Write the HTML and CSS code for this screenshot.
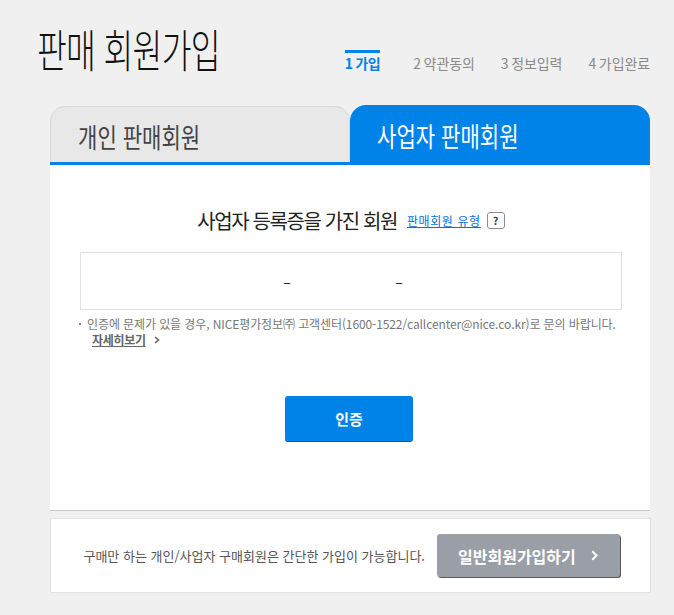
FILE: index.html
```html
<!DOCTYPE html>
<html lang="ko">
<head>
<meta charset="utf-8">
<title>판매 회원가입</title>
<link rel="stylesheet" href="styles.css">
</head>
<body>
<div class="page">
  <header class="head">
    <h1 class="title"><span class="title-text">판매 회원가입</span></h1>
    <ol class="steps">
      <li class="step on">1 가입</li>
      <li class="step">2 약관동의</li>
      <li class="step">3 정보입력</li>
      <li class="step">4 가입완료</li>
    </ol>
  </header>

  <div class="tabs">
    <a class="tab" href="#"><span class="tab-text">개인 판매회원</span></a>
    <a class="tab on" href="#"><span class="tab-text">사업자 판매회원</span></a>
  </div>

  <section class="panel">
    <div class="heading-row">
      <h2 class="heading">사업자 등록증을 가진 회원</h2>
      <a class="type-link" href="#">판매회원 유형</a>
      <span class="help">?</span>
    </div>

    <div class="bizno">
      <span class="field f1"></span>
      <span class="dash">–</span>
      <span class="field f2"></span>
      <span class="dash">–</span>
      <span class="field f3"></span>
    </div>

    <p class="note"><span class="bullet"></span>인증에 문제가 있을 경우, NICE평가정보㈜ 고객센터(1600-1522/callcenter@nice.co.kr)로 문의 바랍니다.</p>
    <p class="more"><a href="#" class="more-link">자세히보기</a><svg class="more-arrow" width="6" height="8" viewBox="0 0 6 8"><polyline points="1,1 4.5,4 1,7" fill="none" stroke="#666" stroke-width="1.6"/></svg></p>

    <div class="btn-row">
      <button class="btn-auth" type="button">인증</button>
    </div>
  </section>

  <div class="foot">
    <p class="foot-text">구매만 하는 개인/사업자 구매회원은 간단한 가입이 가능합니다.</p>
    <a class="btn-general" href="#">일반회원가입하기
      <svg class="chev" width="7" height="11" viewBox="0 0 7 11"><polyline points="1.3,1.3 5.5,5.5 1.3,9.7" fill="none" stroke="#fff" stroke-width="2"/></svg>
    </a>
  </div>
</div>
</body>
</html>
```

FILE: styles.css
```css
* { box-sizing: border-box; }

body {
  margin: 0;
  background: #f0f0f0;
  font-family: "Noto Sans CJK KR", "Noto Sans", sans-serif;
  color: #222;
}

.page {
  width: 600px;
  margin-left: 50px;
}

/* header */
.head {
  height: 105px;
  display: flex;
  justify-content: space-between;
  align-items: flex-start;
}

.title {
  margin: 0 0 0 -13px;
  padding-top: 26px;
  font-size: 45px;
  font-weight: 300;
  line-height: 1;
  color: #111;
  white-space: nowrap;
}

.title-text {
  display: inline-block;
  transform: scaleX(0.72);
  transform-origin: 0 0;
  letter-spacing: -1px;
}

.steps {
  list-style: none;
  margin: 50px 0 0 0;
  padding: 0;
  display: flex;
  gap: 26px;
}

.step {
  border-top: 3px solid transparent;
  padding-top: 2px;
  font-size: 14px;
  line-height: 16px;
  letter-spacing: -0.1px;
  word-spacing: -1px;
  color: #8a8a8a;
  white-space: nowrap;
}

.step.on {
  border-top-color: #0083e8;
  color: #0083e8;
  font-weight: 700;
  letter-spacing: -0.4px;
  margin-right: 7px;
}

/* tabs */
.tabs {
  display: flex;
  height: 60px;
  border-bottom: 3px solid #0083e8;
  align-items: flex-end;
}

.tab {
  width: 300px;
  display: flex;
  align-items: center;
  padding-left: 27px;
  text-decoration: none;
  font-size: 27px;
  line-height: 1;
  white-space: nowrap;
}

.tab:not(.on) {
  height: 56px;
  background: #e8e8e8;
  border: 1px solid #d8d8d8;
  border-bottom: none;
  border-radius: 15px 15px 0 0;
  color: #444;
}

.tab.on {
  height: 57px;
  background: #0083e8;
  border-radius: 16px 16px 0 0;
  color: #fff;
}

.tab-text {
  display: inline-block;
  transform: scaleX(0.78);
  transform-origin: 0 50%;
  margin-top: 4px;
}

/* panel */
.panel {
  height: 346px;
  background: #fff;
  border-bottom: 1px solid #c8c8c8;
  padding: 43px 28px 0 30px;
}

.heading-row {
  display: flex;
  justify-content: center;
  align-items: center;
  height: 24px;
  padding-left: 0;
}

.heading {
  margin: 0;
  font-size: 20px;
  font-weight: 400;
  letter-spacing: -1.4px;
  color: #222;
}

.type-link {
  margin-left: 10px;
  font-size: 12px;
  color: #0a6fd8;
  letter-spacing: 0.6px;
}

.help {
  margin-left: 6px;
  width: 18px;
  height: 17px;
  border: 1px solid #8d8d8d;
  border-radius: 3px;
  font-size: 11px;
  font-weight: 700;
  line-height: 15px;
  text-align: center;
  color: #444;
}

.bizno {
  margin-top: 20px;
  height: 58px;
  border: 1px solid #e1e1e1;
  display: flex;
  align-items: center;
}

.field {
  display: block;
  height: 30px;
}

.f1 { width: 202px; }
.f2 { width: 104px; }
.f3 { flex: 1; }

.dash {
  font-size: 14px;
  color: #111;
  width: 8px;
  text-align: center;
}

.note {
  margin: 6px 0 0 -1px;
  font-size: 12px;
  line-height: 16px;
  color: #777;
  letter-spacing: -0.1px;
  white-space: nowrap;
  display: flex;
  align-items: center;
}

.bullet {
  display: inline-block;
  width: 2px;
  height: 2px;
  background: #888;
  margin-right: 6px;
}

.more {
  margin: 0 0 0 12px;
  font-size: 12px;
  line-height: 16px;
  display: flex;
  align-items: center;
}

.more-link {
  color: #666;
  font-weight: 700;
  letter-spacing: -0.3px;
}

.more-arrow {
  margin-left: 8px;
}

.btn-row {
  margin-top: 48px;
  display: flex;
  justify-content: center;
}

.btn-auth {
  width: 128px;
  height: 46px;
  margin-left: -4px;
  border: none;
  border-bottom: 1px solid #0a5ea8;
  border-radius: 3px;
  background: #0083e8;
  color: #fff;
  font-family: inherit;
  font-size: 15px;
  font-weight: 700;
}

/* footer */
.foot {
  margin-top: 7px;
  width: 601px;
  height: 75px;
  background: #fff;
  border: 1px solid #e2e2e2;
  display: flex;
  align-items: center;
  justify-content: flex-end;
  gap: 12px;
  padding-right: 30px;
}

.foot-text {
  margin: 0;
  font-size: 13px;
  color: #555;
  letter-spacing: 0;
  white-space: nowrap;
}

.btn-general {
  width: 183px;
  height: 43px;
  display: flex;
  align-items: center;
  padding-left: 21px;
  gap: 15px;
  background: #9a9ea6;
  border-radius: 3px;
  box-shadow: 1px 1px 0 #55585d;
  color: #fff;
  text-decoration: none;
  font-size: 16px;
  font-weight: 700;
  letter-spacing: 0;
}
```
